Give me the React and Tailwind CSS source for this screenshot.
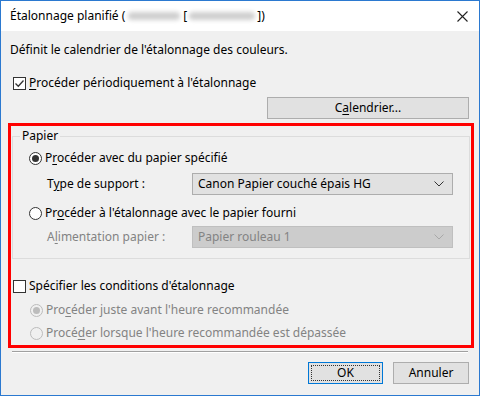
import React from 'react';

const font = { fontFamily: '"Noto Sans", "Open Sans", sans-serif' };

function U({ children }) {
  return <span className="underline underline-offset-2">{children}</span>;
}

function Checkbox({ checked }) {
  return (
    <span className="flex h-[13px] w-[13px] shrink-0 items-center justify-center border border-[#333333] bg-white">
      {checked && (
        <svg width="11" height="11" viewBox="0 0 11 11">
          <path d="M1.5 5.5 L4.3 8.3 L9.5 2.5" fill="none" stroke="#333333" strokeWidth="1.3" />
        </svg>
      )}
    </span>
  );
}

function Radio({ checked, disabled }) {
  return (
    <span
      className={
        'flex h-[13px] w-[13px] shrink-0 items-center justify-center rounded-full border ' +
        (disabled ? 'border-[#bcbcbc] bg-[#f0f0f0]' : 'border-[#333333] bg-white')
      }
    >
      {checked && (
        <span className={'h-[7px] w-[7px] rounded-full ' + (disabled ? 'bg-[#bcbcbc]' : 'bg-[#333333]')}></span>
      )}
    </span>
  );
}

function Chevron({ color }) {
  return (
    <svg width="10" height="6" viewBox="0 0 10 6">
      <path d="M0.5 0.5 L5 5 L9.5 0.5" fill="none" stroke={color} strokeWidth="1" />
    </svg>
  );
}

export default function App() {
  return (
    <div
      className="flex h-[396px] w-[480px] flex-col border border-[#2b79d0] bg-[#f0f0f0] text-[12px] leading-[16px] text-black"
      style={font}
    >
      {/* barre de titre */}
      <div className="flex h-[30px] shrink-0 items-center bg-white pl-[9px] pr-[11px]">
        <span>Étalonnage planifié (</span>
        <span className="mx-[3px] h-[8px] w-[52px] rounded-full bg-[#cfcfcf] blur-[2px]"></span>
        <span>[</span>
        <span className="mx-[2px] h-[8px] w-[66px] rounded-full bg-[#cfcfcf] blur-[2px]"></span>
        <span>])</span>
        <svg className="ml-auto" width="11" height="11" viewBox="0 0 11 11">
          <path d="M0.5 0.5 L10.5 10.5 M10.5 0.5 L0.5 10.5" stroke="#222222" strokeWidth="1.1" />
        </svg>
      </div>

      <div className="flex flex-1 flex-col px-[7px]">
        <p className="ml-[2px] mt-[11px]">Définit le calendrier de l'étalonnage des couleurs.</p>

        <label className="ml-[5px] mt-[17px] flex items-center gap-[3px]">
          <Checkbox checked />
          <span>
            <U>P</U>rocéder périodiquement à l'étalonnage
          </span>
        </label>

        <div className="mt-[6px] flex justify-end pr-[3px]">
          <button className="h-[22px] w-[202px] border border-[#adadad] bg-[#e1e1e1]">
            C<U>a</U>lendrier...
          </button>
        </div>

        {/* zone encadrée */}
        <div className="mt-[4px] flex h-[225px] w-[466px] flex-col border-[3px] border-[#ff0000]">
          <fieldset className="mx-[1px] mt-[2px] h-[131px] border border-[#dcdcdc] px-[13px]">
            <legend className="-ml-[6px] px-[2px]">Papier</legend>

            <label className="mt-[6px] flex items-center gap-[3px] pl-[3px]">
              <Radio checked />
              <span>
                P<U>r</U>océder avec du papier spécifié
              </span>
            </label>

            <div className="mt-[7px] flex items-center pl-[21px]">
              <span className="w-[145px]">
                T<U>y</U>pe de support :
              </span>
              <div className="flex h-[22px] w-[261px] items-center justify-between border border-[#adadad] bg-[#e1e1e1] pl-[5px] pr-[8px]">
                <span>Canon Papier couché épais HG</span>
                <Chevron color="#333333" />
              </div>
            </div>

            <label className="mt-[10px] flex items-center gap-[3px] pl-[3px]">
              <Radio />
              <span>
                Pr<U>o</U>céder à l'étalonnage avec le papier fourni
              </span>
            </label>

            <div className="mt-[5px] flex items-center pl-[21px] text-[#838383]">
              <span className="w-[145px]">
                A<U>l</U>imentation papier :
              </span>
              <div className="flex h-[22px] w-[261px] items-center justify-between border border-[#bfbfbf] bg-[#cccccc] pl-[5px] pr-[8px]">
                <span>Papier rouleau 1</span>
                <Chevron color="#a8a8a8" />
              </div>
            </div>
          </fieldset>

          <label className="ml-[2px] mt-[19px] flex items-center gap-[3px]">
            <Checkbox />
            <span>
              Spécif<U>i</U>er les conditions d'étalonnage
            </span>
          </label>

          <label className="ml-[19px] mt-[8px] flex items-center gap-[3px] text-[#838383]">
            <Radio checked disabled />
            <span>
              Pro<U>c</U>éder juste avant l'heure recommandée
            </span>
          </label>

          <label className="ml-[19px] mt-[7px] flex items-center gap-[3px] text-[#838383]">
            <Radio disabled />
            <span>
              Procé<U>d</U>er lorsque l'heure recommandée est dépassée
            </span>
          </label>
        </div>

        <div className="mx-[4px] mt-[3px] h-[2px] border-t border-[#a0a0a0] border-b-white border-b"></div>

        <div className="mt-[9px] flex justify-end gap-[10px] pr-[3px]">
          <button className="h-[22px] w-[75px] border border-[#0078d7] bg-[#e1e1e1] p-[2px]">
            <span className="flex h-full w-full items-center justify-center border border-dotted border-[#333333]">OK</span>
          </button>
          <button className="h-[22px] w-[76px] border border-[#adadad] bg-[#e1e1e1]">Annuler</button>
        </div>
      </div>
    </div>
  );
}
